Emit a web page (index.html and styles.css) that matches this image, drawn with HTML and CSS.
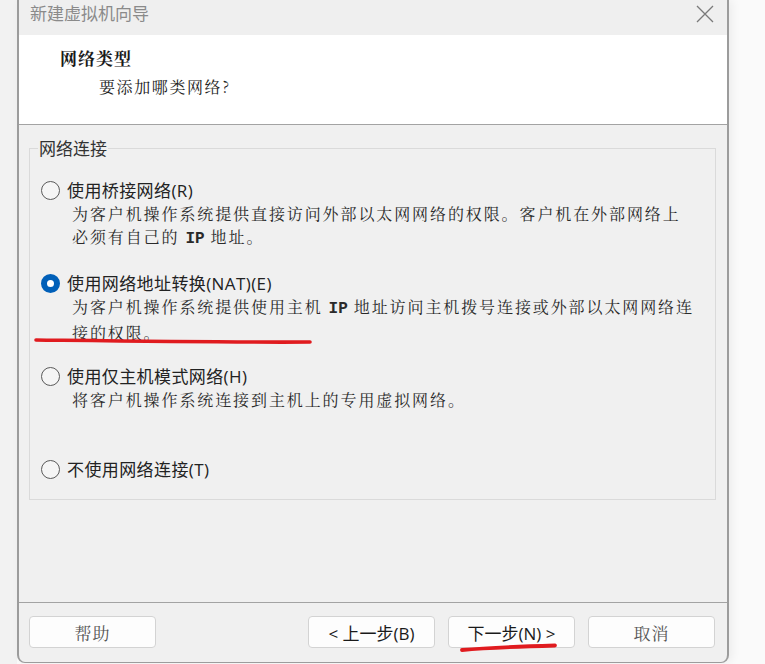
FILE: index.html
```html
<!DOCTYPE html>
<html lang="zh-CN">
<head>
    <meta charset="UTF-8">
    <title>新建虚拟机向导</title>
    <link rel="stylesheet" href="styles.css">
</head>
<body>
    <div class="window">
        <!-- Title bar -->
        <div class="titlebar">
            <span class="title">新建虚拟机向导</span>
            <svg class="close" width="18" height="18" viewBox="0 0 18 18">
                <path d="M1 1 L17 17 M17 1 L1 17" stroke="#7a7a7a" stroke-width="1.3" fill="none"/>
            </svg>
        </div>

        <!-- Page header -->
        <div class="header">
            <div class="header-title">网络类型</div>
            <div class="header-sub">要添加哪类网络?</div>
        </div>

        <!-- Options -->
        <div class="content">
            <fieldset class="group">
                <legend>网络连接</legend>
                <div class="options">
                    <div class="option">
                        <div class="option-row">
                            <span class="radio"></span>
                            <span class="option-label">使用桥接网络(R)</span>
                        </div>
                        <div class="option-desc">为客户机操作系统提供直接访问外部以太网网络的权限。客户机在外部网络上<br>必须有自己的 <b>IP</b> 地址。</div>
                    </div>
                    <div class="option">
                        <div class="option-row">
                            <span class="radio checked"></span>
                            <span class="option-label">使用网络地址转换(NAT)(E)</span>
                        </div>
                        <div class="option-desc">为客户机操作系统提供使用主机 <b>IP</b> 地址访问主机拨号连接或外部以太网网络连<br>接的权限。</div>
                    </div>
                    <div class="option">
                        <div class="option-row">
                            <span class="radio"></span>
                            <span class="option-label">使用仅主机模式网络(H)</span>
                        </div>
                        <div class="option-desc">将客户机操作系统连接到主机上的专用虚拟网络。</div>
                    </div>
                    <div class="option">
                        <div class="option-row">
                            <span class="radio"></span>
                            <span class="option-label">不使用网络连接(T)</span>
                        </div>
                    </div>
                </div>
            </fieldset>
        </div>

        <!-- Buttons -->
        <div class="footer">
            <button class="btn btn-light">帮助</button>
            <div class="spacer"></div>
            <button class="btn">&lt; 上一步(B)</button>
            <button class="btn">下一步(N) &gt;</button>
            <button class="btn btn-light">取消</button>
        </div>
    </div>

    <!-- Hand-drawn red marks on the screenshot -->
    <svg class="marks" width="765" height="664" viewBox="0 0 765 664">
        <path d="M36 340 C 120 341, 230 342.5, 310 342" stroke="#e01b1f" stroke-width="3.6" stroke-linecap="round" fill="none"/>
        <path d="M462 650 C 490 647.5, 520 646.5, 555 645.5" stroke="#e01b1f" stroke-width="3.8" stroke-linecap="round" fill="none"/>
    </svg>
</body>
</html>
```

FILE: styles.css
```css
* {
    margin: 0;
    padding: 0;
    box-sizing: border-box;
}

body {
    width: 765px;
    height: 664px;
    overflow: hidden;
    position: relative;
    background: linear-gradient(to right, #f2f2f2 0, #f2f2f2 17px, #fafafa 17px);
    font-family: "Noto Sans CJK SC", "Noto Sans", sans-serif;
    color: #1a1a1a;
}

.window {
    margin-left: 17px;
    width: 712px;
    height: 663px;
    display: flex;
    flex-direction: column;
    background: #f0f0f0;
    border: 1px solid #9c9c9c;
    border-left-width: 2px;
    border-right-width: 2px;
    border-top: none;
    border-radius: 0 0 8px 8px;
    box-shadow: 3px 0 10px rgba(0, 0, 0, 0.06);
}

/* Title bar */
.titlebar {
    height: 35px;
    display: flex;
    justify-content: space-between;
    align-items: flex-start;
    padding: 2px 13px 0 11px;
    background: #efefef;
}

.title {
    font-size: 17px;
    line-height: 22px;
    color: #8a8a8a;
}

.close {
    margin-top: 3px;
}

/* Header */
.header {
    height: 90px;
    background: #fff;
    border-bottom: 1px solid #a3a3a3;
    padding: 12px 0 0 41px;
}

.header-title {
    font-family: "Noto Serif CJK SC", "Noto Sans CJK SC", serif;
    font-size: 17px;
    font-weight: 700;
    line-height: 22px;
    letter-spacing: 1px;
}

.header-sub {
    font-family: "Noto Serif CJK SC", "Noto Sans CJK SC", serif;
    font-size: 16px;
    line-height: 22px;
    letter-spacing: 1.6px;
    margin: 7px 0 0 39px;
    color: #222;
}

/* Group box */
.content {
    flex: 1;
    padding: 12px 11px 0 10px;
}

.group {
    height: 363px;
    border: 1px solid #dadada;
    padding: 0 0 0 11px;
}

.group legend {
    font-size: 17px;
    line-height: 22px;
    color: #333;
    margin-left: -3px;
    padding: 0 1px;
}

.options {
    padding-top: 20px;
}

.option {
    height: 93px;
}

.option-row {
    display: flex;
    align-items: center;
    gap: 7px;
    height: 23px;
}

.radio {
    width: 19px;
    height: 19px;
    border-radius: 50%;
    border: 1px solid #5a5a5a;
    background: #f5f5f5;
    flex-shrink: 0;
}

.radio.checked {
    border: 6px solid #005fb8;
    background: #fff;
}

.option-label {
    font-family: "Open Sans", "Noto Sans CJK SC", sans-serif;
    font-size: 17px;
    line-height: 23px;
    letter-spacing: 0.4px;
    color: #222;
}

.option-desc {
    margin-left: 31px;
    font-family: "Noto Serif CJK SC", "Noto Sans CJK SC", serif;
    font-size: 16px;
    line-height: 23px;
    letter-spacing: 1.9px;
    white-space: nowrap;
    color: #2a2a2a;
}

.option-desc b {
    font-family: "Liberation Mono", monospace;
    font-size: 16px;
    letter-spacing: 0;
}

/* Footer */
.footer {
    height: 60px;
    border-top: 1px solid #a3a3a3;
    display: flex;
    align-items: flex-start;
    gap: 13px;
    padding: 13px 12px 0 10px;
}

.spacer {
    flex: 1;
}

.btn {
    width: 127px;
    height: 32px;
    background: #fdfdfd;
    border: 1px solid #d3d3d3;
    border-radius: 4px;
    font-family: "Open Sans", "Noto Sans CJK SC", sans-serif;
    font-size: 17px;
    color: #1a1a1a;
}

.btn-light {
    font-family: "Noto Serif CJK SC", "Noto Sans CJK SC", serif;
    letter-spacing: 1px;
    color: #555;
}

/* Red annotation strokes */
.marks {
    position: absolute;
    top: 0;
    left: 0;
    pointer-events: none;
}
```
